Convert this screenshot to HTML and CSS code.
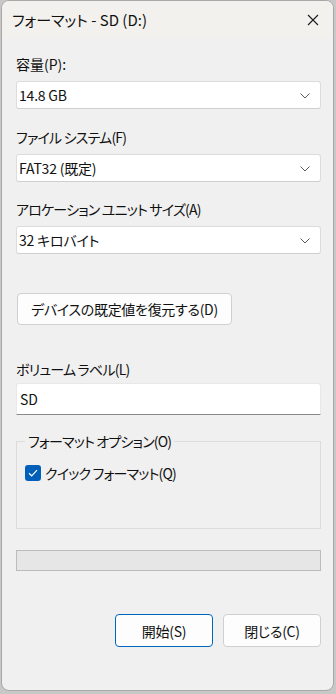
FILE: index.html
```html
<html>
  <head>
    <meta name="viewport" content="width=device-width, initial-scale=1" />
    <link rel="stylesheet" href="styles.css">
  </head>
  <body>
    <div class="format-window">
      <div class="titlebar">
        <span class="title">フォーマット - SD (D:)</span>
        <svg class="close-icon" width="12" height="12" viewBox="0 0 12 12">
          <path d="M1 1 L11 11 M11 1 L1 11" stroke="#1a1a1a" stroke-width="1.1" fill="none" />
        </svg>
      </div>

      <div class="content">
        <div class="label label-first">容量(P):</div>
        <div class="select">
          <span>14.8 GB</span>
          <svg class="chevron" width="10" height="6" viewBox="0 0 10 6"><path d="M0.5 0.5 L5 5 L9.5 0.5" stroke="#5a5a5a" fill="none" /></svg>
        </div>

        <div class="label">ファイル システム(F)</div>
        <div class="select">
          <span>FAT32 (既定)</span>
          <svg class="chevron" width="10" height="6" viewBox="0 0 10 6"><path d="M0.5 0.5 L5 5 L9.5 0.5" stroke="#5a5a5a" fill="none" /></svg>
        </div>

        <div class="label label-tight">アロケーション ユニット サイズ(A)</div>
        <div class="select">
          <span>32 キロバイト</span>
          <svg class="chevron" width="10" height="6" viewBox="0 0 10 6"><path d="M0.5 0.5 L5 5 L9.5 0.5" stroke="#5a5a5a" fill="none" /></svg>
        </div>

        <div class="btn btn-restore">デバイスの既定値を復元する(D)</div>

        <div class="label label-volume">ボリューム ラベル(L)</div>
        <div class="textbox">SD</div>

        <fieldset class="options">
          <legend>フォーマット オプション(O)</legend>
          <label class="check-row">
            <span class="checkbox">
              <svg width="10" height="8" viewBox="0 0 10 8"><path d="M1 4.2 L3.7 6.8 L9 1.2" stroke="#fff" stroke-width="1.2" fill="none" /></svg>
            </span>
            クイック フォーマット(Q)
          </label>
        </fieldset>

        <div class="progress"></div>

        <div class="actions">
          <div class="btn btn-primary">開始(S)</div>
          <div class="btn">閉じる(C)</div>
        </div>
      </div>
    </div>
  </body>
</html>
```

FILE: styles.css
```css
body {
  margin: 0;
  background: #c8c8c8;
  font-family: "Noto Sans CJK JP", "Noto Sans", sans-serif;
  font-feature-settings: "palt";
  font-size: 14px;
  letter-spacing: -0.8px;
  color: #111;
}
.format-window {
  box-sizing: border-box;
  width: 333px;
  height: 691px;
  margin-left: 1px;
  border: 1px solid #a8a8a8;
  border-radius: 8px;
  overflow: hidden;
  background: #f0f0f0;
}
.titlebar {
  height: 37px;
  background: #f3f1ee;
  display: flex;
  align-items: center;
  justify-content: space-between;
  padding: 0 14px 0 10px;
}
.title {
  font-size: 15px;
  letter-spacing: 0;
  line-height: 20px;
}
.content {
  padding: 0 12px 0 14px;
}
.label {
  height: 20px;
  line-height: 20px;
  margin-top: 18px;
}
.label-first {
  margin-top: 16px;
  letter-spacing: 0;
}
.label-tight {
  margin-top: 17px;
}
.label-volume {
  margin-top: 34px;
  margin-bottom: 4px;
}
.select {
  box-sizing: border-box;
  height: 28px;
  margin-top: 7px;
  background: #fff;
  border: 1px solid #dcdcdc;
  border-bottom-color: #cfcfcf;
  border-radius: 3px;
  display: flex;
  align-items: center;
  justify-content: space-between;
  padding: 0 10px 0 2px;
  letter-spacing: -0.2px;
}
.chevron {
  margin-top: 1px;
}
.btn {
  box-sizing: border-box;
  height: 33px;
  background: #fdfdfd;
  border: 1px solid #d0d0d0;
  border-radius: 4px;
  display: flex;
  align-items: center;
  justify-content: center;
  letter-spacing: -0.3px;
}
.btn-restore {
  width: 215px;
  height: 32px;
  margin: 39px 0 0 1px;
}
.textbox {
  box-sizing: border-box;
  height: 32px;
  background: #fff;
  border: 1px solid #e8e8e8;
  border-bottom: 1px solid #8a8a8a;
  border-radius: 3px 3px 0 0;
  line-height: 30px;
  padding-left: 3px;
  letter-spacing: 0;
}
.options {
  margin: 14px 0 0 0;
  padding: 0 0 0 8px;
  height: 100px;
  box-sizing: border-box;
  border: 1px solid #dcdcdc;
  border-radius: 0;
}
.options legend {
  padding: 0 3px;
  margin-left: 0;
  line-height: 24px;
}
.check-row {
  display: flex;
  align-items: center;
  gap: 4px;
  margin-top: 10px;
}
.checkbox {
  width: 16px;
  height: 16px;
  background: #005fb8;
  border-radius: 3px;
  display: flex;
  align-items: center;
  justify-content: center;
}
.progress {
  box-sizing: border-box;
  height: 21px;
  margin-top: 21px;
  background: #e6e6e6;
  border: 1px solid #bcbcbc;
}
.actions {
  display: flex;
  justify-content: flex-end;
  gap: 10px;
  margin-top: 43px;
}
.actions .btn {
  width: 98px;
}
.btn-primary {
  border-color: #0067c0;
}
```
